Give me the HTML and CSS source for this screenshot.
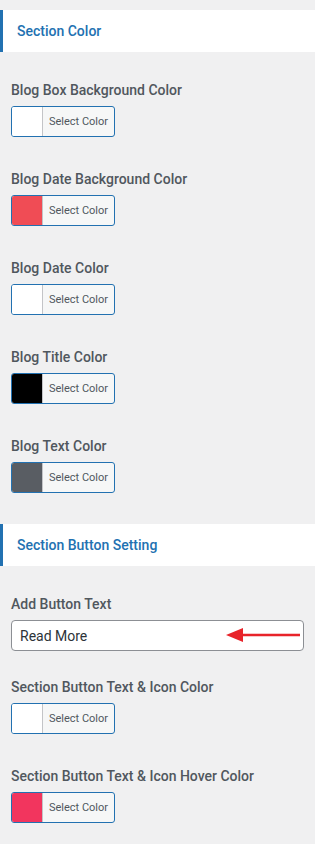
FILE: index.html
```html
<!DOCTYPE html>
<html lang="en">
<head>
  <meta charset="UTF-8">
  <meta name="viewport" content="width=device-width, initial-scale=1.0">
  <title>Section Settings</title>
  <link rel="stylesheet" href="styles.css">
</head>
<body>
  <div class="panel">
    <h3 class="section-title">Section Color</h3>

    <div class="field">
      <label>Blog Box Background Color</label>
      <button class="color-btn"><span class="swatch swatch-white"></span><span class="btn-text">Select Color</span></button>
    </div>
    <div class="field">
      <label>Blog Date Background Color</label>
      <button class="color-btn"><span class="swatch swatch-red"></span><span class="btn-text">Select Color</span></button>
    </div>
    <div class="field">
      <label>Blog Date Color</label>
      <button class="color-btn"><span class="swatch swatch-white"></span><span class="btn-text">Select Color</span></button>
    </div>
    <div class="field">
      <label>Blog Title Color</label>
      <button class="color-btn"><span class="swatch swatch-black"></span><span class="btn-text">Select Color</span></button>
    </div>
    <div class="field">
      <label>Blog Text Color</label>
      <button class="color-btn"><span class="swatch swatch-gray"></span><span class="btn-text">Select Color</span></button>
    </div>

    <h3 class="section-title">Section Button Setting</h3>

    <div class="field field-text">
      <label>Add Button Text</label>
      <div class="text-wrap">
        <input type="text" class="text-input" value="Read More">
        <svg class="arrow" width="76" height="14" viewBox="0 0 76 14">
          <line x1="14" y1="7" x2="74" y2="7" stroke="#e8232a" stroke-width="2.5"/>
          <polygon points="0,7 17,0 17,14" fill="#e8232a"/>
        </svg>
      </div>
    </div>
    <div class="field">
      <label>Section Button Text &amp; Icon Color</label>
      <button class="color-btn"><span class="swatch swatch-white"></span><span class="btn-text">Select Color</span></button>
    </div>
    <div class="field">
      <label>Section Button Text &amp; Icon Hover Color</label>
      <button class="color-btn"><span class="swatch swatch-pink"></span><span class="btn-text">Select Color</span></button>
    </div>
  </div>
</body>
</html>
```

FILE: styles.css
```css
body {
  margin: 0;
  background: #f0f0f1;
  font-family: Roboto, "Noto Sans", sans-serif;
  color: #50575e;
}
.panel {
  padding: 10px 0 20px;
}
.section-title {
  margin: 31px 0 0;
  height: 42px;
  display: flex;
  align-items: center;
  padding-left: 14px;
  background: #fff;
  border-left: 3px solid #2271b1;
  color: #2271b1;
  font-size: 14px;
  font-weight: 500;
}
.section-title:first-child {
  margin-top: 0;
}
.field {
  padding: 0 11px;
  margin-top: 33px;
}
.section-title + .field {
  margin-top: 29px;
}
.field-text + .field {
  margin-top: 27px;
}
.field label {
  display: block;
  font-size: 14px;
  font-weight: 500;
  line-height: 18px;
  margin-bottom: 7px;
}
.color-btn {
  display: flex;
  align-items: stretch;
  width: 104px;
  height: 31px;
  padding: 0;
  border: 1px solid #2271b1;
  border-radius: 3px;
  background: #f6f7f7;
  overflow: hidden;
  cursor: pointer;
  font-family: inherit;
}
.swatch {
  width: 30px;
  border-right: 1px solid #c3c4c7;
}
.swatch-white { background: #fff; }
.swatch-red { background: #f04c55; }
.swatch-black { background: #000; }
.swatch-gray { background: #595d63; }
.swatch-pink { background: #f2355e; }
.btn-text {
  flex: 1;
  display: flex;
  align-items: center;
  justify-content: center;
  font-size: 11px;
  color: #50575e;
}
.text-wrap {
  position: relative;
}
.text-input {
  display: block;
  box-sizing: border-box;
  width: 100%;
  height: 31px;
  padding: 0 8px;
  border: 1px solid #8c8f94;
  border-radius: 4px;
  background: #fff;
  font-family: inherit;
  font-size: 14px;
  color: #2c3338;
}
.arrow {
  position: absolute;
  left: 215px;
  top: 8px;
}
```
